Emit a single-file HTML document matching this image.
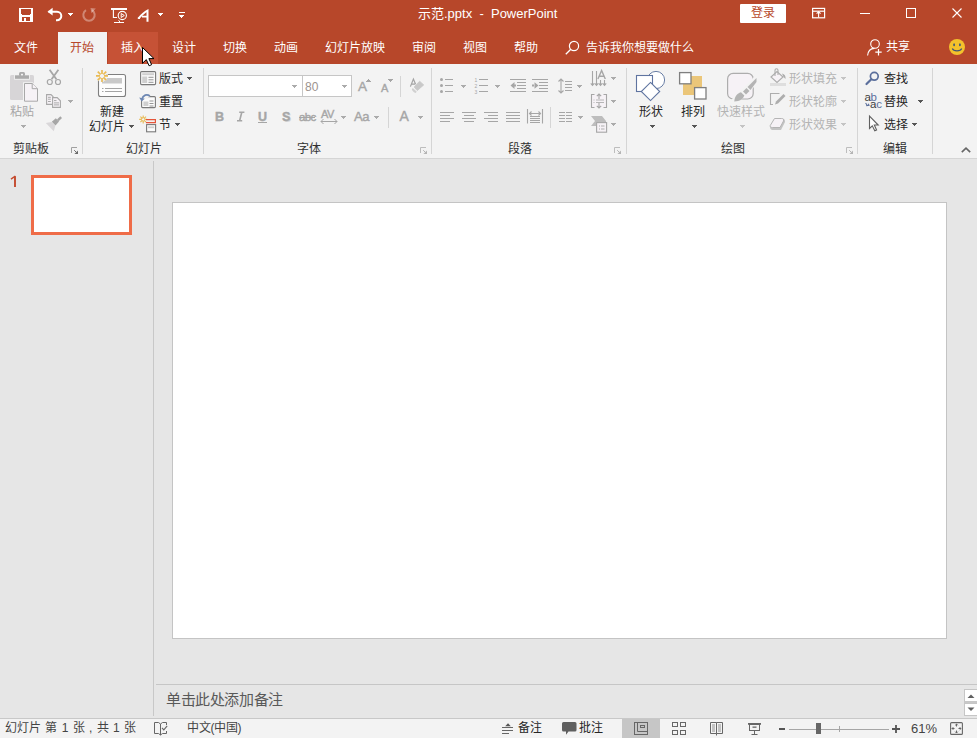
<!DOCTYPE html>
<html lang="zh-CN">
<head>
<meta charset="utf-8">
<style>
*{margin:0;padding:0;box-sizing:border-box}
html,body{width:977px;height:738px;overflow:hidden;background:#e6e6e6;font-family:"Liberation Sans",sans-serif;font-size:12px;color:#262626}
svg{position:absolute;overflow:visible}
#title{position:absolute;left:0;top:0;width:977px;height:64px;background:#b7472a}
#ribbon{position:absolute;left:0;top:64px;width:977px;height:94px;background:#f3f3f3}
#rbline{position:absolute;left:0;top:158px;width:977px;height:1px;background:#d5d5d5}
#vsep{position:absolute;left:153px;top:161px;width:1px;height:555px;background:#c8c8c8}
#slide{position:absolute;left:172px;top:202px;width:775px;height:437px;background:#fff;border:1px solid #c4c4c4}
#notesline{position:absolute;left:156px;top:684px;width:821px;height:1px;background:#c6c6c6}
#status{position:absolute;left:0;top:718px;width:977px;height:20px;background:#f3f3f3;border-top:1px solid #c8c8c8}
.t{position:absolute;white-space:nowrap;line-height:12px;font-size:12px}
.w{color:#fff}
.g{color:#a6a6a6}
.lbl{color:#303030}
.gi{color:#a6a6a6;-webkit-text-stroke:0.4px #a6a6a6}
.dk{color:#262626}
.sep{position:absolute;width:1px;background:#d5d5d5}
.dd{position:absolute;width:0;height:0;border-left:2.5px solid transparent;border-right:2.5px solid transparent;border-top:3px solid #7a7a7a}
.ddg{border-top-color:#b9b9b9}
.ddw{border-top-color:#fff}
.ar{shape-rendering:crispEdges}
</style>
</head>
<body>
<div id="title"></div>
<!-- hover tab & selected tab -->
<div style="position:absolute;left:108px;top:32px;width:50px;height:32px;background:#c65236"></div>
<div style="position:absolute;left:58px;top:32px;width:49px;height:32px;background:#f3f3f3"></div>

<!-- QAT icons -->
<svg style="left:19px;top:8px" width="14" height="14" viewBox="0 0 14 14">
<rect x="0" y="0" width="14" height="14" fill="#fff"/>
<rect x="2" y="1" width="10" height="5" fill="#b7472a"/>
<rect x="3" y="5" width="8" height="2" fill="#b7472a"/>
<rect x="3" y="9" width="8" height="4" fill="#b7472a"/>
<rect x="5" y="10" width="2" height="3" fill="#fff"/>
</svg>
<svg style="left:46px;top:7px" width="18" height="16" viewBox="0 0 18 16">
<path d="M2.5 4.7 H11 A4.3 4.3 0 0 1 11 13.3 H10" fill="none" stroke="#fff" stroke-width="2"/>
<path d="M1.5 4.7 L6.6 0.8 L6.6 8.6 Z" fill="#fff"/>
</svg>
<svg class="ar" style="left:68px;top:13px" width="5" height="3"><path d="M0 0h5v1h-1v1h-1v1h-1v-1h-1v-1h-1z" fill="#ffffff"/></svg>
<svg style="left:82px;top:8px" width="15" height="14" viewBox="0 0 15 14">
<path d="M4 2.2 A5.7 5.7 0 1 0 10 2.2" fill="none" stroke="rgba(255,255,255,0.35)" stroke-width="2"/>
<path d="M8.5 0 L13.8 0.6 L9.5 5.2 Z" fill="rgba(255,255,255,0.35)"/>
</svg>
<svg style="left:111px;top:8px" width="17" height="16" viewBox="0 0 17 16">
<rect x="0" y="0" width="16" height="2" fill="#fff"/>
<path d="M2.4 2 V9.5 H6" fill="none" stroke="#fff" stroke-width="1.1"/>
<circle cx="11.3" cy="7.5" r="4.1" fill="none" stroke="#fff" stroke-width="1.1"/>
<path d="M10.2 5.5 L13.3 7.5 L10.2 9.5 Z" fill="none" stroke="#fff" stroke-width="1"/>
<path d="M3 14.5 H13" stroke="#fff" stroke-width="1"/>
<path d="M7.6 12.2 L9 14.2" stroke="#fff" stroke-width="1"/>
</svg>
<svg style="left:137px;top:9px" width="13" height="14" viewBox="0 0 13 14">
<path d="M1.6 9.3 C4 6.5 7 3.2 10.5 1.6 V12.8" fill="none" stroke="#fff" stroke-width="2"/>
<path d="M0.8 9.3 H3 M5 7.6 H10.5" stroke="#fff" stroke-width="1.6"/>
</svg>
<svg class="ar" style="left:158px;top:13px" width="5" height="3"><path d="M0 0h5v1h-1v1h-1v1h-1v-1h-1v-1h-1z" fill="#ffffff"/></svg>
<div style="position:absolute;left:179px;top:12px;width:6px;height:1.3px;background:#fff"></div>
<svg class="ar" style="left:179px;top:15px" width="5" height="3"><path d="M0 0h5v1h-1v1h-1v1h-1v-1h-1v-1h-1z" fill="#ffffff"/></svg>

<div class="t w" style="left:418px;top:7px;font-size:13px;line-height:13px">示范.pptx&nbsp; - &nbsp;PowerPoint</div>

<!-- login button -->
<div style="position:absolute;left:740px;top:4px;width:46px;height:19px;background:#fff;border-radius:1px"></div>
<div class="t" style="left:751px;top:7px;color:#b7472a">登录</div>
<!-- ribbon display options -->
<svg style="left:811px;top:7px" width="16" height="13" viewBox="0 0 16 13">
<rect x="1.6" y="1.4" width="12" height="9.4" fill="none" stroke="#fff" stroke-width="1.2"/>
<path d="M1.6 4.2 H13.6" stroke="#fff" stroke-width="1.2"/>
<path d="M7.6 4.5 V10.5 M5.6 6.7 L7.6 4.8 L9.6 6.7" fill="none" stroke="#fff" stroke-width="1.1"/>
</svg>
<div style="position:absolute;left:860px;top:13px;width:10px;height:1px;background:#fff"></div>
<div style="position:absolute;left:906px;top:8px;width:10px;height:10px;border:1px solid #fff"></div>
<svg style="left:951px;top:7px" width="12" height="12" viewBox="0 0 12 12">
<path d="M1.5 1.5 L10.5 10.5 M10.5 1.5 L1.5 10.5" stroke="#fff" stroke-width="1.1"/>
</svg>

<!-- tabs -->
<div class="t w" style="left:14px;top:42px">文件</div>
<div class="t" style="left:70px;top:42px;color:#b7472a">开始</div>
<div class="t w" style="left:121px;top:42px">插入</div>
<div class="t w" style="left:172px;top:42px">设计</div>
<div class="t w" style="left:223px;top:42px">切换</div>
<div class="t w" style="left:274px;top:42px">动画</div>
<div class="t w" style="left:325px;top:42px">幻灯片放映</div>
<div class="t w" style="left:412px;top:42px">审阅</div>
<div class="t w" style="left:463px;top:42px">视图</div>
<div class="t w" style="left:514px;top:42px">帮助</div>
<svg style="left:565px;top:40px" width="15" height="15" viewBox="0 0 15 15">
<circle cx="9" cy="6" r="4.6" fill="none" stroke="#fff" stroke-width="1.2"/>
<path d="M5.8 9.2 L0.8 14.2" stroke="#fff" stroke-width="1.3"/>
</svg>
<div class="t w" style="left:586px;top:42px">告诉我你想要做什么</div>
<svg style="left:867px;top:39px" width="16" height="17" viewBox="0 0 16 17">
<circle cx="8" cy="5" r="4.3" fill="none" stroke="#fff" stroke-width="1.1"/>
<path d="M0.6 16.5 C1 12 4 9.6 7.5 9.4" fill="none" stroke="#fff" stroke-width="1.1"/>
<path d="M11.5 10 V16.5 M8.3 13.2 H14.7" stroke="#fff" stroke-width="1.2"/>
</svg>
<div class="t w" style="left:886px;top:41px">共享</div>
<svg style="left:949px;top:39px" width="16" height="16" viewBox="0 0 16 16">
<circle cx="8" cy="8" r="8" fill="#f3c22c"/>
<ellipse cx="5.1" cy="5.8" rx="0.9" ry="1.5" fill="#3f5577"/>
<ellipse cx="10.9" cy="5.8" rx="0.9" ry="1.5" fill="#3f5577"/>
<path d="M3.3 9.5 C4.5 12.6 11.5 12.6 12.7 9.5" fill="none" stroke="#3f5577" stroke-width="1.1"/>
</svg>

<div id="ribbon"></div>
<div id="rbline"></div>
<div id="vsep"></div>

<!-- ===== RIBBON ===== -->
<div class="sep" style="left:82px;top:68px;height:86px"></div>
<div class="sep" style="left:203px;top:68px;height:86px"></div>
<div class="sep" style="left:431px;top:68px;height:86px"></div>
<div class="sep" style="left:626px;top:68px;height:86px"></div>
<div class="sep" style="left:857px;top:68px;height:86px"></div>
<div class="sep" style="left:932px;top:68px;height:86px"></div>

<!-- group labels -->
<div class="t lbl" style="left:13px;top:143px">剪贴板</div>
<div class="t lbl" style="left:126px;top:143px">幻灯片</div>
<div class="t lbl" style="left:297px;top:143px">字体</div>
<div class="t lbl" style="left:508px;top:143px">段落</div>
<div class="t lbl" style="left:721px;top:143px">绘图</div>
<div class="t lbl" style="left:883px;top:143px">编辑</div>
<!-- dialog launchers -->
<svg style="left:71px;top:147px" width="8" height="8" viewBox="0 0 8 8"><path d="M0.5 6 V0.5 H6" fill="none" stroke="#a0a0a0" stroke-width="1"/><path d="M3.2 3.2 L5.5 5.5" stroke="#6a6a6a" stroke-width="1"/><path d="M7 3.4 V7 H3.4 Z" fill="#6a6a6a"/></svg>
<svg style="left:420px;top:147px" width="8" height="8" viewBox="0 0 8 8"><path d="M0.5 6 V0.5 H6" fill="none" stroke="#bdbdbd" stroke-width="1"/><path d="M3.2 3.2 L5.5 5.5" stroke="#b5b5b5" stroke-width="1"/><path d="M7 3.4 V7 H3.4 Z" fill="#b5b5b5"/></svg>
<svg style="left:614px;top:147px" width="8" height="8" viewBox="0 0 8 8"><path d="M0.5 6 V0.5 H6" fill="none" stroke="#bdbdbd" stroke-width="1"/><path d="M3.2 3.2 L5.5 5.5" stroke="#b5b5b5" stroke-width="1"/><path d="M7 3.4 V7 H3.4 Z" fill="#b5b5b5"/></svg>
<svg style="left:846px;top:147px" width="8" height="8" viewBox="0 0 8 8"><path d="M0.5 6 V0.5 H6" fill="none" stroke="#bdbdbd" stroke-width="1"/><path d="M3.2 3.2 L5.5 5.5" stroke="#b5b5b5" stroke-width="1"/><path d="M7 3.4 V7 H3.4 Z" fill="#b5b5b5"/></svg>
<svg style="left:961px;top:147px" width="10" height="6" viewBox="0 0 10 6"><path d="M0.8 5.2 L5 1.2 L9.2 5.2" fill="none" stroke="#666" stroke-width="1.6"/></svg>

<!-- clipboard -->
<svg style="left:10px;top:72px" width="29" height="30" viewBox="0 0 29 30">
<rect x="0" y="3" width="24" height="25" rx="1.5" fill="#d7d5d7"/>
<rect x="4.2" y="2.3" width="15.6" height="5.4" fill="#f3f3f3"/>
<rect x="5" y="3.3" width="14" height="3.5" fill="#ababab"/>
<rect x="9" y="0" width="6" height="4" rx="1.5" fill="#ababab"/>
<rect x="11" y="1.8" width="2" height="1.6" fill="#f3f3f3"/>
<path d="M13 10.2 H22.6 L28.8 16.2 V30 H13 Z" fill="#f3f3f3"/>
<path d="M14.5 11.5 H22.2 L27.5 16.7 V29.2 H14.5 Z" fill="#f6f2f6" stroke="#a8a8a8" stroke-width="1"/>
<path d="M22.2 11.5 V16.7 H27.5" fill="#f6f2f6" stroke="#a8a8a8" stroke-width="1"/>
</svg>
<div class="t g" style="left:10px;top:106px">粘贴</div>
<svg class="ar" style="left:21px;top:125px" width="5" height="3"><path d="M0 0h5v1h-1v1h-1v1h-1v-1h-1v-1h-1z" fill="#ababab"/></svg>
<svg style="left:46px;top:69px" width="16" height="17" viewBox="0 0 16 17">
<path d="M3.6 0.8 L10.4 10.2 M12.4 0.8 L5.6 10.2" stroke="#a6a6a6" stroke-width="1.8"/>
<circle cx="3.8" cy="13" r="2.5" fill="#f3f3f3" stroke="#a6a6a6" stroke-width="1.2"/>
<circle cx="12" cy="13" r="2.5" fill="#f3f3f3" stroke="#a6a6a6" stroke-width="1.2"/>
</svg>
<svg style="left:46px;top:94px" width="16" height="15" viewBox="0 0 16 15">
<path d="M0.6 0.6 H5 L7 2.6 V10.4 H0.6 Z" fill="#f6f2f6" stroke="#a8a8a8" stroke-width="1.1"/>
<path d="M2 3.3 H4.8 M2 5.2 H4.8 M2 7.5 H4.8" stroke="#a8a8a8" stroke-width="1"/>
<path d="M6 3 H11.5 L15 6.5 V14 H6 Z" fill="#f3f3f3"/>
<path d="M6.6 3.6 H11.2 L14.4 6.8 V13.4 H6.6 Z" fill="#f6f2f6" stroke="#a8a8a8" stroke-width="1.1"/>
<path d="M8 6.6 H10.5 M8 8.9 H13 M8 10.9 H13" stroke="#a8a8a8" stroke-width="1"/>
</svg>
<svg class="ar" style="left:68px;top:100px" width="5" height="3"><path d="M0 0h5v1h-1v1h-1v1h-1v-1h-1v-1h-1z" fill="#ababab"/></svg>
<svg style="left:45px;top:115px" width="18" height="17" viewBox="0 0 18 17">
<path d="M12 4.5 L15.3 1.2 L17 2.9 L13.7 6.2 Z" fill="#a6a6a6"/>
<path d="M6.8 6.8 L10.8 3.3 L14 6.5 L10.5 10.5 Z" fill="#a6a6a6"/>
<path d="M0.8 8 L6.6 7 L10.3 10.7 L8.8 16.2 Z" fill="#d9d7d9"/>
</svg>

<!-- slides group -->
<svg style="left:90px;top:68px" width="37" height="30" viewBox="0 0 37 30">
<rect x="8.5" y="6.5" width="27" height="22" rx="2" fill="#fdfdfd" stroke="#7f7f7f" stroke-width="1.1"/>
<rect x="12" y="10" width="20" height="5.5" fill="#c9c9c9"/>
<path d="M12 20.5 H13.5 M15 20.5 H32 M12 23.5 H13.5 M15 23.5 H32" stroke="#9a9a9a" stroke-width="0.9"/>
<g fill="none" stroke-linecap="butt"><path d="M12 1.9 V13.9 M6 7.9 H18 M7.76 3.66 L16.24 12.14 M7.76 12.14 L16.24 3.66" stroke="#f3f3f3" stroke-width="3.4"/>
<path d="M12 1.9 V5.9 M12 9.9 V13.9 M6 7.9 H10 M14 7.9 H18 M7.76 3.66 L10.6 6.5 M13.4 9.3 L16.24 12.14 M7.76 12.14 L10.6 9.3 M13.4 6.5 L16.24 3.66" stroke="#e9bb55" stroke-width="1.7"/></g>
</svg>
<div class="t" style="left:100px;top:106px">新建</div>
<div class="t" style="left:89px;top:121px">幻灯片</div>
<svg class="ar" style="left:129px;top:125px" width="5" height="3"><path d="M0 0h5v1h-1v1h-1v1h-1v-1h-1v-1h-1z" fill="#555555"/></svg>
<svg style="left:140px;top:71px" width="17" height="15" viewBox="0 0 17 15">
<rect x="0.6" y="0.6" width="15" height="13" rx="1" fill="#fbfbfb" stroke="#7a7a7a" stroke-width="1.1"/>
<rect x="2.2" y="2.2" width="11.8" height="2" fill="#cfcfcf"/>
<rect x="2.2" y="5.5" width="5" height="6.5" fill="#cfcfcf"/>
<path d="M8.5 6.3 H13.5 M8.5 8.8 H13.5 M8.5 11.3 H13.5" stroke="#8a8a8a" stroke-width="0.9"/>
</svg>
<div class="t" style="left:159px;top:73px">版式</div>
<svg class="ar" style="left:187px;top:77px" width="5" height="3"><path d="M0 0h5v1h-1v1h-1v1h-1v-1h-1v-1h-1z" fill="#555555"/></svg>
<svg style="left:139px;top:93px" width="18" height="16" viewBox="0 0 18 16">
<rect x="2.6" y="3.6" width="13.8" height="11" rx="1" fill="#fbfbfb" stroke="#7a7a7a" stroke-width="1.1"/>
<rect x="4.4" y="8.5" width="5" height="4.5" fill="#cfcfcf"/>
<path d="M10.5 8 H14.5 M10.5 10.5 H14.5 M10.5 13 H14.5" stroke="#8a8a8a" stroke-width="0.9"/>
<path d="M2.5 4.2 H9" stroke="#f3f3f3" stroke-width="3"/>
<path d="M3 6 C4 2 8 0.8 10.8 3" fill="none" stroke="#f3f3f3" stroke-width="3.4"/>
<path d="M3 6 C4 2 8 0.8 10.8 3" fill="none" stroke="#6d87b3" stroke-width="1.8"/>
<path d="M0.2 4.5 L5.8 5.8 L2.6 8.6 Z" fill="#6d87b3"/>
</svg>
<div class="t" style="left:159px;top:96px">重置</div>
<svg style="left:138px;top:114px" width="20" height="19" viewBox="0 0 20 19">
<g fill="none"><path d="M5.2 1.4 V9.4 M1.2 5.4 H9.2 M2.4 2.6 L8 8.2 M2.4 8.2 L8 2.6" stroke="#e9bb55" stroke-width="1.1"/>
<circle cx="5.2" cy="5.4" r="1.7" fill="#f3f3f3" stroke="#e9bb55" stroke-width="1"/></g>
<path d="M8 5.7 H17.4 V8.6 H8" fill="none" stroke="#e5553a" stroke-width="1.2"/>
<rect x="8.6" y="10.6" width="9" height="7.2" fill="#fbfbfb" stroke="#7a7a7a" stroke-width="1.1"/>
<rect x="10" y="12.4" width="6.2" height="1.8" fill="#cfcfcf"/>
</svg>
<div class="t" style="left:159px;top:119px">节</div>
<svg class="ar" style="left:175px;top:123px" width="5" height="3"><path d="M0 0h5v1h-1v1h-1v1h-1v-1h-1v-1h-1z" fill="#555555"/></svg>


<!-- font group -->
<div style="position:absolute;left:208px;top:75px;width:95px;height:22px;background:#fff;border:1px solid #c6c6c6"></div>
<div style="position:absolute;left:302px;top:75px;width:50px;height:22px;background:#fff;border:1px solid #c6c6c6"></div>
<svg class="ar" style="left:292px;top:85px" width="5" height="3"><path d="M0 0h5v1h-1v1h-1v1h-1v-1h-1v-1h-1z" fill="#ababab"/></svg>
<svg class="ar" style="left:342px;top:85px" width="5" height="3"><path d="M0 0h5v1h-1v1h-1v1h-1v-1h-1v-1h-1z" fill="#ababab"/></svg>
<div class="t" style="left:305px;top:81px;color:#9c938e;font-size:12px">80</div>
<div class="t gi" style="left:358px;top:80px;font-size:13.5px;line-height:13px">A</div>
<svg class="ar" style="left:366px;top:79px" width="5" height="3"><path d="M2 0h1v1h1v1h1v1h-5v-1h1v-1h1z" fill="#a6a6a6"/></svg>
<div class="t gi" style="left:381px;top:83px;font-size:11px;line-height:11px">A</div>
<svg class="ar" style="left:388px;top:79px" width="5" height="3"><path d="M0 0h5v1h-1v1h-1v1h-1v-1h-1v-1h-1z" fill="#a6a6a6"/></svg>
<div class="sep" style="left:400px;top:76px;height:21px"></div>
<svg style="left:404px;top:74px" width="24" height="24" viewBox="0 0 24 24">
<path d="M6.4 12.6 L9.4 5 L11.6 10.2 M7.6 10.2 H11" fill="none" stroke="#a3a3a3" stroke-width="1.2"/>
<path d="M15.6 7.2 L19.7 10.9 L13.3 16.6 L10.2 13 Z" fill="#c8c8c8" stroke="#c8c8c8" stroke-width="0.8" stroke-linejoin="round"/>
<path d="M8.8 14 L12.8 17.8 L11.6 19 C10 18.6 8.6 17.2 7.8 15.2 Z" fill="#d0d0d0"/>
</svg>
<div class="t gi" style="left:215px;top:111px;font-size:12.5px;line-height:12px;font-weight:bold">B</div>
<svg style="left:236px;top:111px" width="10" height="11" viewBox="0 0 10 11"><path d="M3.2 1.2 H8.4 M1 9.8 H6.2 M5.8 1.2 L3.6 9.8" fill="none" stroke="#a6a6a6" stroke-width="1.6"/></svg>
<div class="t gi" style="left:258px;top:111px;font-size:12.5px;line-height:12px;font-weight:bold">U</div>
<div style="position:absolute;left:258px;top:122px;width:9px;height:1px;background:#a6a6a6"></div>
<div class="t" style="left:283px;top:112px;font-size:12.5px;line-height:12px;font-weight:bold;color:#dadada">S</div>
<div class="t gi" style="left:282px;top:111px;font-size:12.5px;line-height:12px;font-weight:bold">S</div>
<div class="t gi" style="left:299px;top:111px;font-size:11.5px;line-height:12px;letter-spacing:-0.6px">abc</div>
<div style="position:absolute;left:299px;top:117px;width:16px;height:1px;background:#a6a6a6"></div>
<div class="t gi" style="left:321px;top:109px;font-size:11px;line-height:11px;letter-spacing:-0.5px">AV</div>
<svg style="left:320px;top:118px" width="18" height="7" viewBox="0 0 18 7"><path d="M1 3.5 H17 M3.5 1 L1 3.5 L3.5 6 M14.5 1 L17 3.5 L14.5 6" fill="none" stroke="#a6a6a6" stroke-width="1"/></svg>
<svg class="ar" style="left:341px;top:116px" width="5" height="3"><path d="M0 0h5v1h-1v1h-1v1h-1v-1h-1v-1h-1z" fill="#ababab"/></svg>
<div class="t gi" style="left:354px;top:110px;font-size:13px;line-height:13px;letter-spacing:-0.3px">Aa</div>
<svg class="ar" style="left:374px;top:116px" width="5" height="3"><path d="M0 0h5v1h-1v1h-1v1h-1v-1h-1v-1h-1z" fill="#ababab"/></svg>
<div class="sep" style="left:388px;top:107px;height:21px"></div>
<div class="t gi" style="left:399.5px;top:109px;font-size:14px;line-height:14px">A</div>
<svg class="ar" style="left:418px;top:116px" width="5" height="3"><path d="M0 0h5v1h-1v1h-1v1h-1v-1h-1v-1h-1z" fill="#ababab"/></svg>


<!-- paragraph group -->
<svg style="left:436px;top:74px" width="200" height="62" viewBox="0 0 200 62">
<g fill="#a6a6a6">
<circle cx="5.5" cy="5.5" r="1.5"/><circle cx="5.5" cy="11.5" r="1.5"/><circle cx="5.5" cy="17.5" r="1.5"/>
</g>
<g stroke="#a6a6a6" stroke-width="1.1" fill="none">
<path d="M9 5.5 H17 M9 11.5 H17 M9 17.5 H17"/>
<path d="M43 5.5 H52 M43 11.5 H52 M43 17.5 H52"/>
<!-- decrease indent -->
<path d="M74 5.5 H90 M81 8.5 H90 M81 11.5 H90 M81 14.5 H90 M74 17.5 H90"/>
<!-- increase indent -->
<path d="M96 5.5 H112 M103 8.5 H112 M103 11.5 H112 M103 14.5 H112 M96 17.5 H112"/>
<!-- line spacing -->
<path d="M125 5 V19 M122.5 7.5 L125 5 L127.5 7.5 M122.5 16.5 L125 19 L127.5 16.5"/>
<path d="M129 7.5 H136 M129 10.5 H136 M129 13.5 H136 M129 16.5 H136"/>
<!-- align rows -->
<path d="M4 38.5 H18 M4 41.5 H14 M4 44.5 H18 M4 47.5 H14"/>
<path d="M26 38.5 H40 M28 41.5 H38 M26 44.5 H40 M28 47.5 H38"/>
<path d="M48 38.5 H62 M52 41.5 H62 M48 44.5 H62 M52 47.5 H62"/>
<path d="M70 38.5 H84 M70 41.5 H84 M70 44.5 H84 M70 47.5 H84"/>
<!-- distributed -->
<path d="M91.5 35 V49.5 M106.5 35 V49.5 M94 39.5 H104 M95.5 37.5 L93.5 39.5 L95.5 41.5 M102.5 37.5 L104.5 39.5 L102.5 41.5 M94 42.5 H104 M94 44.5 H104 M94 46.5 H104 M94 48.5 H104"/>
<!-- columns -->
<path d="M123 38.5 H129 M130 38.5 H136 M123 41.5 H129 M130 41.5 H136 M123 44.5 H129 M130 44.5 H136 M123 47.5 H129 M130 47.5 H136"/>
</g>
<g fill="#a6a6a6" font-family="Liberation Sans" font-size="5">
<text x="38.5" y="7.5">1</text><text x="38.5" y="13.5">2</text><text x="38.5" y="19.5">3</text>
</g>
<path d="M74.5 11.5 L78.5 8 V15 Z M77 10.5 H80 V12.5 H77 Z" fill="#a6a6a6"/>
<path d="M102.5 11.5 L98.5 8.3 V14.7 Z M96 10.6 H99 V12.4 H96 Z" fill="#a6a6a6"/>
<rect x="114" y="33" width="1" height="21" fill="#d5d5d5"/>
<!-- text direction -->
<g stroke="#a6a6a6" stroke-width="1.1" fill="none">
<path d="M156.5 -3 V11 M160.5 -3 V11 M164.5 6 V11 M168.5 6 V11"/>
<path d="M154.8 9.3 L156.5 11.3 L158.2 9.3 M158.8 9.3 L160.5 11.3 L162.2 9.3 M162.8 9.3 L164.5 11.3 L166.2 9.3 M166.8 9.3 L168.5 11.3 L170.2 9.3"/>
<path d="M161.9 5 L165.6 -3.6 L169.3 5 M163.1 2.2 H168.1" stroke-width="1.4"/>
</g>
</svg>
<svg class="ar" style="left:461px;top:85px" width="5" height="3"><path d="M0 0h5v1h-1v1h-1v1h-1v-1h-1v-1h-1z" fill="#ababab"/></svg>
<svg class="ar" style="left:495px;top:85px" width="5" height="3"><path d="M0 0h5v1h-1v1h-1v1h-1v-1h-1v-1h-1z" fill="#ababab"/></svg>
<svg class="ar" style="left:577px;top:85px" width="5" height="3"><path d="M0 0h5v1h-1v1h-1v1h-1v-1h-1v-1h-1z" fill="#ababab"/></svg>
<svg class="ar" style="left:578px;top:116px" width="5" height="3"><path d="M0 0h5v1h-1v1h-1v1h-1v-1h-1v-1h-1z" fill="#ababab"/></svg>
<svg class="ar" style="left:611px;top:77px" width="5" height="3"><path d="M0 0h5v1h-1v1h-1v1h-1v-1h-1v-1h-1z" fill="#ababab"/></svg>
<svg class="ar" style="left:611px;top:100px" width="5" height="3"><path d="M0 0h5v1h-1v1h-1v1h-1v-1h-1v-1h-1z" fill="#ababab"/></svg>
<svg class="ar" style="left:611px;top:123px" width="5" height="3"><path d="M0 0h5v1h-1v1h-1v1h-1v-1h-1v-1h-1z" fill="#ababab"/></svg>
<svg style="left:590px;top:93px" width="18" height="16" viewBox="0 0 18 16">
<rect x="1.5" y="1.5" width="15" height="13" fill="#f6f2f6"/>
<path d="M4.5 1.5 H1.5 V14.5 H4.5 M13.5 1.5 H16.5 V14.5 H13.5" fill="none" stroke="#a6a6a6" stroke-width="1.1"/>
<path d="M9 1 V6 M6.8 3.2 L9 1 L11.2 3.2 M9 10 V15 M6.8 12.8 L9 15 L11.2 12.8" fill="none" stroke="#a6a6a6" stroke-width="1.1"/>
<path d="M6 7 H14 M6 9.5 H14" stroke="#a6a6a6" stroke-width="0.8"/>
<path d="M3.5 7 H4.5 M3.5 9.5 H4.5" stroke="#a6a6a6" stroke-width="0.8"/>
</svg>
<svg style="left:590px;top:115px" width="18" height="18" viewBox="0 0 18 18">
<path d="M1 1 H12 L16 6 V11 H6 L1 11 L5 6 Z" fill="#bdbdbd"/>
<rect x="6" y="7" width="11" height="10.5" fill="#f3f3f3"/>
<rect x="6.6" y="7.6" width="10" height="9.6" fill="#f6f2f6" stroke="#a6a6a6" stroke-width="1.1"/>
<path d="M9 11 H10 M11 11 H14.5 M9 14 H10 M11 14 H14.5" stroke="#a6a6a6" stroke-width="0.9"/>
</svg>


<!-- drawing group -->
<svg style="left:630px;top:66px" width="80" height="40" viewBox="0 0 80 40">
<circle cx="26" cy="14" r="8.6" fill="#fff" stroke="#6a7fa6" stroke-width="1"/>
<rect x="6.5" y="9.5" width="16" height="16" fill="#fff" stroke="#5f74a0" stroke-width="1.1"/>
<path d="M20.5 16.4 L29.7 25.5 L20.5 34.6 L11.3 25.5 Z" fill="#fff" stroke="#5f74a0" stroke-width="1.1"/>
<rect x="53" y="10" width="19" height="19" fill="#ebc679"/>
<rect x="49.6" y="6.6" width="11.4" height="11.2" fill="#fff" stroke="#7f7f7f" stroke-width="1.3"/>
<rect x="64.6" y="21.6" width="11.4" height="11.4" fill="#fff" stroke="#7f7f7f" stroke-width="1.3"/>
</svg>
<div class="t dk" style="left:639px;top:106px">形状</div>
<div class="t dk" style="left:681px;top:106px">排列</div>
<div class="t" style="left:717px;top:106px;color:#b4b4b4">快速样式</div>
<svg class="ar" style="left:650px;top:125px" width="5" height="3"><path d="M0 0h5v1h-1v1h-1v1h-1v-1h-1v-1h-1z" fill="#555"/></svg>
<svg class="ar" style="left:692px;top:125px" width="5" height="3"><path d="M0 0h5v1h-1v1h-1v1h-1v-1h-1v-1h-1z" fill="#555"/></svg>
<svg class="ar" style="left:740px;top:125px" width="5" height="3"><path d="M0 0h5v1h-1v1h-1v1h-1v-1h-1v-1h-1z" fill="#c4c4c4"/></svg>
<svg style="left:726px;top:72px" width="32" height="31" viewBox="0 0 32 31">
<rect x="1.6" y="1.4" width="25.6" height="25.6" rx="5.5" fill="#f6f2f6" stroke="#adadad" stroke-width="1.2"/>
<path d="M8 30 L31 7" stroke="#f3f3f3" stroke-width="7"/>
<path d="M8.2 29.5 C9 24 11 21.5 15 20.3 L18.3 23.6 C17 27.5 14 29.3 8.2 29.5 Z" fill="#b4b4b4"/>
<path d="M17 19.5 L20.5 16 L23.5 19 L20 22.5 Z" fill="#b4b4b4"/>
<path d="M21.5 15 L30.5 6 V10 L24.5 18 Z" fill="#b4b4b4"/>
</svg>
<svg style="left:769px;top:69px" width="18" height="18" viewBox="0 0 18 18">
<path d="M2 8 L8 2.5 L14 8 L8 13.5 Z" fill="#f6f2f6" stroke="#adadad" stroke-width="1.1"/>
<path d="M6 7 V1.2 A1.5 1.5 0 0 1 9 1.2 V6" fill="none" stroke="#adadad" stroke-width="1.1"/>
<path d="M13 4.5 C15.5 5 17 7 16.5 10 L14.5 8 Z" fill="#adadad"/>
<rect x="1" y="14" width="16" height="3" fill="#dedede"/>
</svg>
<svg style="left:769px;top:92px" width="18" height="14" viewBox="0 0 18 14">
<path d="M10.5 1.5 H1.5 V12.5 H4" fill="none" stroke="#adadad" stroke-width="1.1"/>
<path d="M6 12.5 L7 9.5 L14.5 2 L16.5 4 L9 11.5 Z" fill="#adadad"/>
</svg>
<svg style="left:769px;top:117px" width="18" height="14" viewBox="0 0 18 14">
<path d="M1 9.5 C1 12.5 2.5 13 5 13 H12 L16 5 C16 2 14.5 1.5 12 1.5 H7 Z" fill="#c4c4c4"/>
<path d="M1.2 8.6 L5.5 1.5 H12.5 C14.5 1.5 15 2.5 14.5 4 L11 10.5 H3.5 C1.8 10.5 1 9.8 1.2 8.6 Z" fill="#f6f2f6" stroke="#b4b4b4" stroke-width="1"/>
</svg>
<div class="t" style="left:789px;top:73px;color:#b4b4b4">形状填充</div>
<div class="t" style="left:789px;top:96px;color:#b4b4b4">形状轮廓</div>
<div class="t" style="left:789px;top:119px;color:#b4b4b4">形状效果</div>
<svg class="ar" style="left:841px;top:77px" width="5" height="3"><path d="M0 0h5v1h-1v1h-1v1h-1v-1h-1v-1h-1z" fill="#c4c4c4"/></svg>
<svg class="ar" style="left:841px;top:100px" width="5" height="3"><path d="M0 0h5v1h-1v1h-1v1h-1v-1h-1v-1h-1z" fill="#c4c4c4"/></svg>
<svg class="ar" style="left:841px;top:123px" width="5" height="3"><path d="M0 0h5v1h-1v1h-1v1h-1v-1h-1v-1h-1z" fill="#c4c4c4"/></svg>

<!-- editing group -->
<svg style="left:865px;top:71px" width="15" height="14" viewBox="0 0 15 14">
<circle cx="9.3" cy="5.3" r="3.9" fill="none" stroke="#5b6f9c" stroke-width="1.7"/>
<path d="M6.3 8.3 L1.5 13" stroke="#5b6f9c" stroke-width="2.2" stroke-linecap="round"/>
</svg>
<div class="t dk" style="left:884px;top:73px">查找</div>
<svg style="left:860px;top:90px" width="26" height="22" viewBox="0 0 26 22">
<text x="4.4" y="10.7" font-family="Liberation Sans" font-size="11.5" fill="#404040">a</text>
<text x="10.6" y="10.7" font-family="Liberation Sans" font-size="11.5" fill="#5b6f9c">b</text>
<text x="10" y="18" font-family="Liberation Sans" font-size="11.5" fill="#404040">a</text>
<text x="16.3" y="18" font-family="Liberation Sans" font-size="11.5" fill="#5b6f9c">c</text>
<path d="M5.6 13 L7.5 15.8 M6.2 15.6 L9 15.2 L8.2 13.8" fill="none" stroke="#5b6f9c" stroke-width="1.1"/>
</svg>
<div class="t dk" style="left:884px;top:96px">替换</div>
<svg class="ar" style="left:918px;top:100px" width="5" height="3"><path d="M0 0h5v1h-1v1h-1v1h-1v-1h-1v-1h-1z" fill="#555"/></svg>
<svg style="left:868px;top:115px" width="12" height="17" viewBox="0 0 12 17">
<path d="M1.5 1 V13.5 L4.3 10.8 L6.8 15.8 L8.6 14.9 L6.3 10 H10.2 Z" fill="#fff" stroke="#606060" stroke-width="1.1" stroke-linejoin="miter"/>
</svg>
<div class="t dk" style="left:884px;top:119px">选择</div>
<svg class="ar" style="left:912px;top:123px" width="5" height="3"><path d="M0 0h5v1h-1v1h-1v1h-1v-1h-1v-1h-1z" fill="#555"/></svg>


<!-- thumbnails -->
<svg style="left:10px;top:175px" width="8" height="13" viewBox="0 0 8 13"><path d="M5 1.2 V12" stroke="#c44a2e" stroke-width="1.9"/><path d="M1 4.2 L5.4 1" stroke="#c44a2e" stroke-width="1.5"/></svg>
<div style="position:absolute;left:31px;top:175px;width:101px;height:60px;background:#fff;border:3px solid #ef6c48"></div>

<div id="slide"></div>
<div id="notesline"></div>
<div id="status"></div>


<!-- notes -->
<div class="t" style="left:166px;top:693px;font-size:15px;line-height:14px;letter-spacing:-0.4px;color:#595959">单击此处添加备注</div>
<svg style="left:964px;top:689px" width="13" height="28" viewBox="0 0 13 28">
<rect x="0.5" y="0.5" width="13" height="12" fill="#fff" stroke="#c6c6c6" stroke-width="1"/>
<rect x="0" y="12.5" width="13" height="2" fill="#c8c8c8"/>
<rect x="0.5" y="14.5" width="13" height="12" fill="#fff" stroke="#c6c6c6" stroke-width="1"/>
<path d="M3.5 9 L7 5.5 L10.5 9 Z" fill="#606060"/>
<path d="M3.5 18.5 L7 22 L10.5 18.5 Z" fill="#606060"/>
</svg>
<!-- status bar content -->
<div class="t" style="left:5px;top:722px;color:#444;word-spacing:1px">幻灯片 第 1 张 , 共 1 张</div>
<svg style="left:153px;top:722px" width="16" height="14" viewBox="0 0 16 14">
<path d="M1.5 0.5 H5.5 L7.5 2 V13 L5.5 11.5 H1.5 Z" fill="none" stroke="#666" stroke-width="1"/>
<path d="M7.5 2 L9.5 0.5 H13.5 V3 M13.5 9 V11.5 H9.5 L7.5 13" fill="none" stroke="#666" stroke-width="1"/>
<path d="M9 5.8 L10.8 7.8 L14.2 3.8" fill="none" stroke="#666" stroke-width="1.1"/>
</svg>
<div class="t" style="left:187px;top:722px;color:#444;letter-spacing:-0.3px">中文(中国)</div>
<svg style="left:502px;top:722px" width="12" height="13" viewBox="0 0 12 13">
<path d="M3.2 4.2 L6 1.2 L8.8 4.2 Z" fill="#555"/>
<path d="M0 5.5 H11 M0 8.5 H11 M0 11.5 H7" stroke="#666" stroke-width="1"/>
</svg>
<div class="t dk" style="left:518px;top:722px">备注</div>
<svg style="left:562px;top:722px" width="15" height="13" viewBox="0 0 15 13">
<path d="M1.5 0 H13 A1.5 1.5 0 0 1 14.5 1.5 V8 A1.5 1.5 0 0 1 13 9.5 H6.5 L4 12.8 V9.5 H1.5 A1.5 1.5 0 0 1 0 8 V1.5 A1.5 1.5 0 0 1 1.5 0 Z" fill="#5f5f5f"/>
</svg>
<div class="t dk" style="left:579px;top:722px">批注</div>
<div style="position:absolute;left:622px;top:719px;width:38px;height:19px;background:#c6c6c6"></div>
<svg style="left:634px;top:722px" width="15" height="13" viewBox="0 0 15 13">
<rect x="0.5" y="0.5" width="13" height="12" fill="none" stroke="#666" stroke-width="1"/>
<path d="M3.5 0.5 V9.5 H13.5" fill="none" stroke="#666" stroke-width="1"/>
<rect x="6.5" y="3.5" width="4" height="2" fill="none" stroke="#666" stroke-width="1"/>
</svg>
<svg style="left:672px;top:722px" width="15" height="13" viewBox="0 0 15 13">
<rect x="0.5" y="0.5" width="5" height="4" fill="none" stroke="#666" stroke-width="1"/>
<rect x="8.5" y="0.5" width="5" height="4" fill="none" stroke="#666" stroke-width="1"/>
<rect x="0.5" y="8.5" width="5" height="4" fill="none" stroke="#666" stroke-width="1"/>
<rect x="8.5" y="8.5" width="5" height="4" fill="none" stroke="#666" stroke-width="1"/>
</svg>
<svg style="left:710px;top:722px" width="14" height="14" viewBox="0 0 14 14">
<path d="M0.5 0.5 H6.5 V11.5 H0.5 Z M6.5 0.5 H12.5 V11.5 H6.5" fill="none" stroke="#666" stroke-width="1"/>
<path d="M2 3 H5 M2 5 H5 M2 7 H5 M2 9 H5 M8 3 H11 M8 5 H11 M8 7 H11 M8 9 H11" stroke="#888" stroke-width="0.9"/>
<path d="M6.5 11.5 V13.5" stroke="#666" stroke-width="1"/>
</svg>
<svg style="left:748px;top:723px" width="14" height="13" viewBox="0 0 14 13">
<rect x="0" y="0" width="13" height="1.8" fill="#666"/>
<rect x="1.5" y="1.5" width="10" height="6" fill="none" stroke="#666" stroke-width="1"/>
<rect x="4.5" y="3.5" width="4" height="1.3" fill="#666"/>
<path d="M6.5 7.5 V11.5 M3.5 11.5 H9.5" stroke="#666" stroke-width="1"/>
</svg>
<div style="position:absolute;left:779px;top:728px;width:6px;height:2px;background:#555"></div>
<div style="position:absolute;left:789px;top:728.5px;width:100px;height:1px;background:#a6a6a6"></div>
<div style="position:absolute;left:839px;top:726px;width:1px;height:6px;background:#a6a6a6"></div>
<div style="position:absolute;left:816px;top:723px;width:5px;height:11px;background:#666"></div>
<svg style="left:892px;top:725px" width="8" height="8" viewBox="0 0 8 8"><path d="M4 0 V8 M0 4 H8" stroke="#555" stroke-width="1.8"/></svg>
<div class="t" style="left:911px;top:723px;font-size:13px;line-height:12px;color:#444">61%</div>
<svg style="left:950px;top:722px" width="13" height="13" viewBox="0 0 13 13">
<rect x="0.6" y="0.6" width="11.8" height="11.8" rx="1" fill="none" stroke="#666" stroke-width="1.1"/>
<path d="M6.5 2 V4.5 M6.5 8.5 V11 M2 6.5 H4.5 M8.5 6.5 H11" stroke="#666" stroke-width="1"/>
<path d="M5.2 3.3 L6.5 2 L7.8 3.3 M5.2 9.7 L6.5 11 L7.8 9.7 M3.3 5.2 L2 6.5 L3.3 7.8 M9.7 5.2 L11 6.5 L9.7 7.8" fill="none" stroke="#666" stroke-width="1"/>
</svg>

<!-- cursor -->
<svg style="left:142px;top:47px" width="13" height="20" viewBox="0 0 13 20">
<path d="M0.5 0.5 V16.3 L4.3 12.6 L7.1 18.8 L9.6 17.7 L6.9 11.6 H12 Z" fill="#fff" stroke="#000" stroke-width="1" stroke-linejoin="miter"/>
</svg>
</body>
</html>
